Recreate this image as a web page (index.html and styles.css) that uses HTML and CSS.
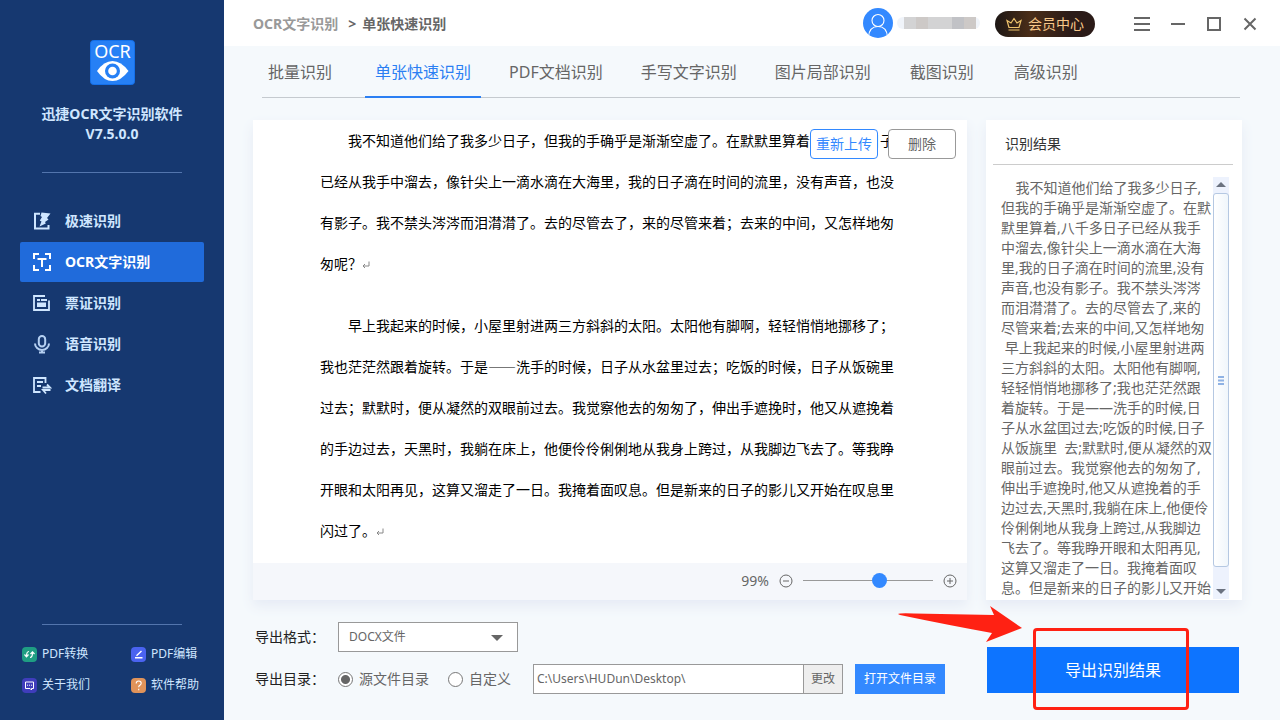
FILE: index.html
```
<!DOCTYPE html>
<html lang="zh-CN">
<head>
<meta charset="utf-8">
<title>迅捷OCR文字识别软件</title>
<link rel="stylesheet" href="styles.css">
</head>
<body>
<div class="app">
  <aside class="sidebar">
    <div class="brand">
      <svg class="logo" viewBox="0 0 45 45" aria-hidden="true">
        <rect x="0.5" y="0.5" width="44" height="44" rx="3" fill="#2680f5" stroke="#1470ea"/>
        <text x="22.5" y="18" text-anchor="middle" class="logo-text">OCR</text>
        <path d="M7 31Q14 21 22.500 21T38.500 31Q31 41 22.500 41T7 31Z" fill="#fff"/>
        <circle cx="22.500" cy="31" r="7.500" fill="#2680f5"/>
        <circle cx="22.500" cy="31" r="4.300" fill="#fff"/>
      </svg>
      <div class="brand-name">迅捷OCR文字识别软件<br>V7.5.0.0</div>
    </div>
    <nav class="side-nav">
      <a href="#" class="side-item">
        <svg viewBox="0 0 20 20" aria-hidden="true"><path d="M8 2.800H3V17.500H16.500V14" fill="none" stroke="#cfe6ff" stroke-width="2"/><path d="M9.500 1.500L18.500 2.500L15 7L16.500 8.500L13 11L13.800 12.500L7.500 15.500L9.500 10.500L7.800 9.500L10 6L8.500 5Z" fill="#cfe6ff"/></svg>
        极速识别</a>
      <a href="#" class="side-item side-item-active">
        <svg viewBox="0 0 20 20" aria-hidden="true"><path d="M2 7V2H7M13 2H18V7M18 13V18H13M7 18H2V13M5.500 7H14.500M10 7V15" fill="none" stroke="#fff" stroke-width="2"/></svg>
        OCR文字识别</a>
      <a href="#" class="side-item">
        <svg viewBox="0 0 20 20" aria-hidden="true"><path d="M13 3H2V17H17V7.500" fill="none" stroke="#cfe6ff" stroke-width="1.800"/><path d="M5 6H8V8H5ZM9 6H15V8H9ZM5 9.500H14V14H5Z" fill="#cfe6ff"/></svg>
        票证识别</a>
      <a href="#" class="side-item">
        <svg viewBox="0 0 20 20" aria-hidden="true"><rect x="6.800" y="2" width="6.400" height="10.500" rx="3.200" fill="none" stroke="#b5d0f2" stroke-width="2"/><path d="M3 9.500A7 6.500 0 0 0 17 9.500M10 16V18.500M7 18.500H13" fill="none" stroke="#b5d0f2" stroke-width="2"/></svg>
        语音识别</a>
      <a href="#" class="side-item">
        <svg viewBox="0 0 20 20" aria-hidden="true"><path d="M8.500 17H2V3H13.500V8M5 7H11M5 11H9M10.500 12.500H18L15 9.500M18.500 15H11L14 18.500" fill="none" stroke="#cfe6ff" stroke-width="1.800"/></svg>
        文档翻译</a>
    </nav>
    <nav class="side-links">
      <a href="#"><svg viewBox="0 0 15 15" aria-hidden="true"><rect width="15" height="15" rx="4" fill="#1f9e83"/><path d="M7 4.500Q4.500 4.500 4.500 9.500M2.500 7.500L4.500 9.800L6.500 7.500M8 10.500Q10.500 10.500 10.500 5.500M8.500 7L10.500 4.800L12.500 7" fill="none" stroke="#fff" stroke-width="1.200"/></svg>PDF转换</a>
      <a href="#"><svg viewBox="0 0 15 15" aria-hidden="true"><rect width="15" height="15" rx="4" fill="#4a63f0"/><path d="M4 10.700H11.500M5.500 8.800L10.500 4" fill="none" stroke="#fff" stroke-width="1.400"/></svg>PDF编辑</a>
      <a href="#"><svg viewBox="0 0 15 15" aria-hidden="true"><rect width="15" height="15" rx="4" fill="#3f3dbb"/><path d="M3.500 4H11.500V10.500H9.500V12L8 10.500H3.500Z" fill="none" stroke="#fff"/><path d="M5 7.200H6M7 7.200H8M9 7.200H10" stroke="#fff"/></svg>关于我们</a>
      <a href="#"><svg viewBox="0 0 15 15" aria-hidden="true"><rect width="15" height="15" rx="4" fill="#e0935a"/><path d="M5.200 5.500Q5.200 3 7.700 3T10.200 5.300Q10.200 6.500 8.900 7.300T7.700 9.300M7.700 10.800V12.200" fill="none" stroke="#fff" stroke-width="1.100"/></svg>软件帮助</a>
    </nav>
  </aside>

  <div class="content">
    <header class="titlebar">
      <div class="crumbs"><span class="crumb-parent">OCR文字识别</span><span class="crumb-arrow">&gt;</span><span>单张快速识别</span></div>
      <svg class="avatar" viewBox="0 0 30 30" aria-hidden="true"><defs><clipPath id="face"><circle cx="15" cy="15" r="15"/></clipPath></defs><g clip-path="url(#face)"><rect width="30" height="30" fill="#3389ff"/><g fill="none" stroke="#fff" stroke-width="1.100"><circle cx="15" cy="12.500" r="6"/><path d="M5.500 29C6 21.500 10 18.500 15 18.500S24 21.500 24.500 29"/></g></g></svg>
      <div class="masked-name"><i></i><i></i><i></i><i></i><i></i><i></i></div>
      <button class="vip"><svg viewBox="0 0 16 14" aria-hidden="true"><path d="M3 10.500L1 3.500L5 6L8 1.500L11 6L15 3.500L13 10.500ZM2.500 13H13.500" fill="none" stroke="#eec36c" stroke-width="1.200"/></svg>会员中心</button>
      <div class="window-tools">
        <button aria-label="菜单"><svg viewBox="0 0 16 16" aria-hidden="true"><path d="M0 2H16M0 8H16M0 14H16"/></svg></button>
        <button aria-label="最小化"><svg viewBox="0 0 16 16" aria-hidden="true"><path d="M1 8H15"/></svg></button>
        <button aria-label="最大化"><svg viewBox="0 0 16 16" aria-hidden="true"><path d="M2 2H14V14H2Z"/></svg></button>
        <button aria-label="关闭"><svg viewBox="0 0 16 16" aria-hidden="true"><path d="M2.500 2.500L13.500 13.500M13.500 2.500L2.500 13.500"/></svg></button>
      </div>
    </header>

    <nav class="tabs">
      <button class="tab">批量识别</button>
      <button class="tab tab-active">单张快速识别</button>
      <button class="tab">PDF文档识别</button>
      <button class="tab">手写文字识别</button>
      <button class="tab">图片局部识别</button>
      <button class="tab">截图识别</button>
      <button class="tab">高级识别</button>
    </nav>

    <main class="panels">
      <section class="preview">
        <div class="document">
          <p>我不知道他们给了我多少日子，但我的手确乎是渐渐空虚了。在默默里算着，八千多日子<br>已经从我手中溜去，像针尖上一滴水滴在大海里，我的日子滴在时间的流里，没有声音，也没<br>有影子。我不禁头涔涔而泪潸潸了。去的尽管去了，来的尽管来着；去来的中间，又怎样地匆<br>匆呢？<svg class="pilcrow" viewBox="0 0 8 8" aria-hidden="true"><path d="M7 0.500V5H1M3 3L1 5L3 7" fill="none" stroke="#888"/></svg></p>
          <p>早上我起来的时候，小屋里射进两三方斜斜的太阳。太阳他有脚啊，轻轻悄悄地挪移了；<br>我也茫茫然跟着旋转。于是——洗手的时候，日子从水盆里过去；吃饭的时候，日子从饭碗里<br>过去；默默时，便从凝然的双眼前过去。我觉察他去的匆匆了，伸出手遮挽时，他又从遮挽着<br>的手边过去，天黑时，我躺在床上，他便伶伶俐俐地从我身上跨过，从我脚边飞去了。等我睁<br>开眼和太阳再见，这算又溜走了一日。我掩着面叹息。但是新来的日子的影儿又开始在叹息里<br>闪过了。<svg class="pilcrow" viewBox="0 0 8 8" aria-hidden="true"><path d="M7 0.500V5H1M3 3L1 5L3 7" fill="none" stroke="#888"/></svg></p>
        </div>
        <div class="preview-actions">
          <button class="small-btn small-btn-primary">重新上传</button>
          <button class="small-btn">删除</button>
        </div>
        <div class="zoombar">
          <label for="zoom">99%</label>
          <button class="zoom-btn" aria-label="缩小"><svg viewBox="0 0 14 14" aria-hidden="true"><circle cx="7" cy="7" r="6"/><path d="M4 7H10"/></svg></button>
          <input id="zoom" class="zoom-range" type="range" min="0" max="100" value="60">
          <button class="zoom-btn" aria-label="放大"><svg viewBox="0 0 14 14" aria-hidden="true"><circle cx="7" cy="7" r="6"/><path d="M4 7H10M7 4V10"/></svg></button>
        </div>
      </section>

      <section class="result">
        <h2 class="result-title"><label for="result-text">识别结果</label></h2>
        <div class="result-body">
          <textarea id="result-text" class="result-text" spellcheck="false">
    我不知道他们给了我多少日子,
但我的手确乎是渐渐空虚了。在默
默里算着,八千多日子已经从我手
中溜去,像针尖上一滴水滴在大海
里,我的日子滴在时间的流里,没有
声音,也没有影子。我不禁头涔涔
而泪潸潸了。去的尽管去了,来的
尽管来着;去来的中间,又怎样地匆
 早上我起来的时候,小屋里射进两
三方斜斜的太阳。太阳他有脚啊,
轻轻悄悄地挪移了;我也茫茫然跟
着旋转。于是——洗手的时候,日
子从水盆囯过去;吃饭的时候,日子
从饭旐里  去;默默时,便从凝然的双
眼前过去。我觉察他去的匆匆了,
伸出手遮挽时,他又从遮挽着的手
边过去,天黑时,我躺在床上,他便伶
伶俐俐地从我身上跨过,从我脚边
飞去了。等我睁开眼和太阳再见,
这算又溜走了一日。我掩着面叹
息。但是新来的日子的影儿又开始</textarea>
          <div class="scrollbar" aria-hidden="true">
            <svg class="scroll-arrow" viewBox="0 0 16 16"><path d="M8 5L13 10H3Z" fill="#6b7280"/></svg>
            <div class="scroll-thumb"><svg viewBox="0 0 6 9"><path d="M0 1H6M0 4.500H6M0 8H6" stroke="#8fb2e4" stroke-width="2"/></svg></div>
            <svg class="scroll-arrow" viewBox="0 0 16 16"><path d="M3 6H13L8 11Z" fill="#6b7280"/></svg>
          </div>
        </div>
      </section>
    </main>

    <footer class="export">
      <form class="export-form">
        <div class="form-row">
          <label class="form-label" for="format">导出格式：</label>
          <div class="select-wrap"><select id="format"><option>DOCX文件</option></select></div>
        </div>
        <div class="form-row">
          <span class="form-label">导出目录：</span>
          <label class="radio"><input type="radio" name="dir" checked>源文件目录</label>
          <label class="radio"><input type="radio" name="dir">自定义</label>
          <div class="path">
            <input type="text" aria-label="导出目录" value="C:\Users\HUDun\Desktop\">
            <button type="button">更改</button>
          </div>
          <button type="button" class="open-dir">打开文件目录</button>
        </div>
      </form>
      <div class="export-action">
        <button class="export-btn">导出识别结果</button>
        <div class="marker"></div>
        <svg class="arrow" viewBox="0 0 124 36" aria-hidden="true"><path d="M0 8Q1 7 16 7.500L96 9L92 0L124 22L88 36L94 27Q50 19 2 9Z" fill="#ff2113"/></svg>
      </div>
    </footer>
  </div>
</div>
</body>
</html>
```
FILE: styles.css
```
* {
  box-sizing: border-box;
}

body {
  margin: 0;
  font-family: "Noto Sans", "Noto Sans CJK SC", sans-serif;
  font-size: 14px;
  line-height: 20px;
  color: #666;
}

button,
input,
select,
textarea {
  font: inherit;
  color: inherit;
  margin: 0;
}

button {
  padding: 0;
  border: 0;
  background: none;
  white-space: nowrap;
}

a {
  color: inherit;
  text-decoration: none;
}

svg {
  display: block;
  flex: none;
}

.app {
  display: flex;
  min-height: 100vh;
}

/* Sidebar */
.sidebar {
  flex: none;
  width: 224px;
  display: flex;
  flex-direction: column;
  background: #163870;
  color: #cfe6ff;
}

.brand {
  display: flex;
  flex-direction: column;
  align-items: center;
  gap: 19px;
  margin: 0 42px;
  padding: 40px 0 28px;
  border-bottom: 1px solid #5375ad;
}

.logo {
  width: 45px;
  height: 45px;
}

.logo-text {
  font-size: 18px;
  fill: #fff;
}

.brand-name {
  font-weight: bold;
  text-align: center;
  white-space: nowrap;
}

.side-nav {
  display: flex;
  flex-direction: column;
  gap: 1px;
  padding: 28px 20px;
}

.side-item {
  display: flex;
  align-items: center;
  gap: 13px;
  height: 40px;
  padding-left: 12px;
  border-radius: 2px;
  font-weight: bold;
}

.side-item svg {
  width: 20px;
  height: 20px;
}

.side-item-active {
  background: #206bdb;
  color: #fff;
}

.side-links {
  display: grid;
  grid-template-columns: 109px auto;
  justify-content: start;
  row-gap: 11px;
  margin: auto 0 0;
  padding: 20px 0 25px 22px;
  font-size: 12px;
  background: linear-gradient(#5375ad, #5375ad) 42px 0 / 140px 1px no-repeat;
}

.side-links a {
  display: flex;
  align-items: center;
  gap: 5px;
  white-space: nowrap;
}

.side-links svg {
  width: 15px;
  height: 15px;
}

/* Title bar */
.content {
  flex: 1;
  min-width: 0;
  display: flex;
  flex-direction: column;
  background: #f5f9fc;
}

.titlebar {
  display: flex;
  align-items: center;
  height: 46px;
  padding: 0 12px 0 29px;
  background: #fff;
}

.crumbs {
  display: flex;
  margin-right: auto;
  padding-top: 2px;
  font-weight: bold;
  color: #666;
}

.crumb-parent {
  color: #999;
}

.crumb-arrow {
  margin: 0 6px 0 10px;
}

.avatar {
  width: 30px;
  height: 30px;
}

.masked-name {
  display: flex;
  margin: 0 15px 0 4px;
  padding: 0 4px 0 7px;
  border-radius: 6px;
  background: #f0f4fa;
}

.masked-name i {
  width: 12px;
  height: 12px;
  background: #d3d3d4;
}

.masked-name i:nth-child(2),
.masked-name i:nth-child(6) {
  background: #cdc9c7;
}

.masked-name i:nth-child(5) {
  background: #c1c2c6;
}

.vip {
  display: flex;
  align-items: center;
  justify-content: center;
  gap: 6px;
  width: 100px;
  height: 26px;
  margin-top: 2px;
  border-radius: 13px;
  background: linear-gradient(90deg, #1d1715, #4a2d18 35%, #2b1b18 75%);
  color: #f8c88a;
}

.vip svg {
  width: 16px;
  height: 14px;
}

.window-tools {
  display: flex;
  margin-left: 29px;
}

.window-tools button {
  display: grid;
  place-items: center;
  width: 36px;
  height: 44px;
  padding-top: 2px;
}

.window-tools svg {
  width: 16px;
  height: 16px;
  fill: none;
  stroke: #666;
  stroke-width: 2;
}

/* Tabs */
.tabs {
  display: flex;
  gap: 18px;
  height: 52px;
  margin: 0 40px 0 38px;
  border-bottom: 1px solid #c5cacf;
}

.tab {
  min-width: 86px;
  height: 52px;
  padding: 2px 10px 0;
  border-bottom: 2px solid transparent;
  font-size: 16px;
}

.tab:first-child {
  margin: 0 4px 0 -5px;
}

.tab-active {
  border-color: #2b7ff3;
  color: #2b7ff3;
}

/* Panels */
.panels {
  flex: 1;
  display: grid;
  grid-template-columns: minmax(0, 1fr) 256px;
  gap: 19px;
  padding: 22px 38px 0 29px;
}

.preview,
.result {
  display: flex;
  flex-direction: column;
  background: #fff;
  box-shadow: 0 6px 12px #e6ebf5;
}

.preview {
  position: relative;
}

.document {
  flex: 1;
  padding: 0 67px 10px;
  font-family: "Noto Sans CJK SC", sans-serif;
  line-height: 41px;
  color: #000;
  white-space: nowrap;
}

.document p {
  margin: 0 0 21px;
  text-indent: 28px;
}

.document p:last-child {
  margin-bottom: 0;
}

.pilcrow {
  display: inline-block;
  width: 8px;
  height: 8px;
}

.preview-actions {
  position: absolute;
  top: 9px;
  right: 11px;
  display: flex;
  gap: 10px;
}

.small-btn {
  width: 68px;
  height: 30px;
  border: 1px solid #999;
  border-radius: 4px;
  background: #fff;
}

.small-btn-primary {
  border-color: #3389ff;
  color: #3389ff;
}

.zoombar {
  display: flex;
  align-items: center;
  justify-content: flex-end;
  gap: 10px;
  height: 37px;
  padding: 0 10px 2px 0;
  background: #f5f7fb;
}

.zoom-btn svg {
  width: 14px;
  height: 14px;
  fill: none;
  stroke: #666;
}

.zoom-range {
  appearance: none;
  width: 130px;
  height: 16px;
  background: linear-gradient(#999, #999) center / 100% 1px no-repeat;
}

.zoom-range::-webkit-slider-thumb {
  appearance: none;
  width: 15px;
  height: 15px;
  border-radius: 50%;
  background: #3389ff;
}

.result-title {
  margin: 0 9px 0 7px;
  padding: 14px 12px 10px;
  border-bottom: 1px solid #ccc;
  font-size: 14px;
  font-weight: normal;
  color: #333;
}

.result-body {
  flex: 1;
  display: flex;
  padding: 12px 13px 1px 15px;
}

.result-text {
  flex: 1;
  min-width: 0;
  padding: 1px 0 0;
  border: 0;
  outline: 0;
  resize: none;
  overflow: hidden;
  background: none;
  line-height: 20px;
  white-space: pre;
}

.scrollbar {
  display: flex;
  flex-direction: column;
  width: 16px;
  background: #edf2fd;
}

.scroll-arrow {
  width: 16px;
  height: 16px;
}

.scroll-thumb {
  flex: 1;
  display: grid;
  place-items: center;
  margin-bottom: 16px;
  border: 1px solid #b5c8e2;
  border-radius: 3px;
  background: linear-gradient(90deg, #fff, #f0f6fb);
}

.scroll-thumb svg {
  width: 6px;
  height: 9px;
}

/* Export area */
.export {
  display: flex;
  justify-content: space-between;
  padding: 22px 41px 26px 31px;
}

.export-form {
  display: flex;
  flex-direction: column;
  gap: 12px;
}

.form-row {
  display: flex;
  align-items: center;
  height: 30px;
}

.form-label {
  width: 83px;
  color: #222;
  white-space: nowrap;
}

.select-wrap {
  position: relative;
  width: 180px;
}

.select-wrap::after {
  content: "";
  position: absolute;
  top: 13px;
  right: 15px;
  border: 6px solid transparent;
  border-top: 6px solid #666;
  border-bottom: 0;
}

.select-wrap select {
  appearance: none;
  width: 100%;
  height: 30px;
  padding: 0 10px;
  border: 1px solid #999;
  border-radius: 0;
  background: #fff;
  font-size: 12px;
}

.radio {
  display: flex;
  align-items: center;
  gap: 6px;
  margin-right: 19px;
  white-space: nowrap;
}

.radio input {
  appearance: none;
  width: 15px;
  height: 15px;
  border: 1px solid #777;
  border-radius: 50%;
  background: #fff;
}

.radio input:checked {
  background: radial-gradient(circle, #666 4px, #fff 5px);
}

.path {
  display: flex;
  width: 310px;
  height: 30px;
  margin: 0 12px 0 3px;
  border: 1px solid #999;
  background: #fff;
  font-size: 12px;
}

.path input {
  flex: 1;
  min-width: 0;
  padding: 0 3px;
  border: 0;
}

.path button {
  width: 39px;
  border-left: 1px solid #999;
  background: #eee;
}

.open-dir {
  width: 90px;
  height: 30px;
  background: #3389ff;
  color: #fff;
  font-size: 12px;
}

.export-action {
  position: relative;
  width: 252px;
  padding-top: 25px;
}

.export-btn {
  width: 100%;
  height: 46px;
  background: #0d74ff;
  color: #fff;
  font-size: 16px;
}

.marker {
  position: absolute;
  top: 6px;
  left: 46px;
  width: 156px;
  height: 82px;
  border: 3px solid #ff2113;
  border-radius: 4px;
  pointer-events: none;
}

.arrow {
  position: absolute;
  top: -16px;
  left: -89px;
  width: 124px;
  height: 36px;
}
```
